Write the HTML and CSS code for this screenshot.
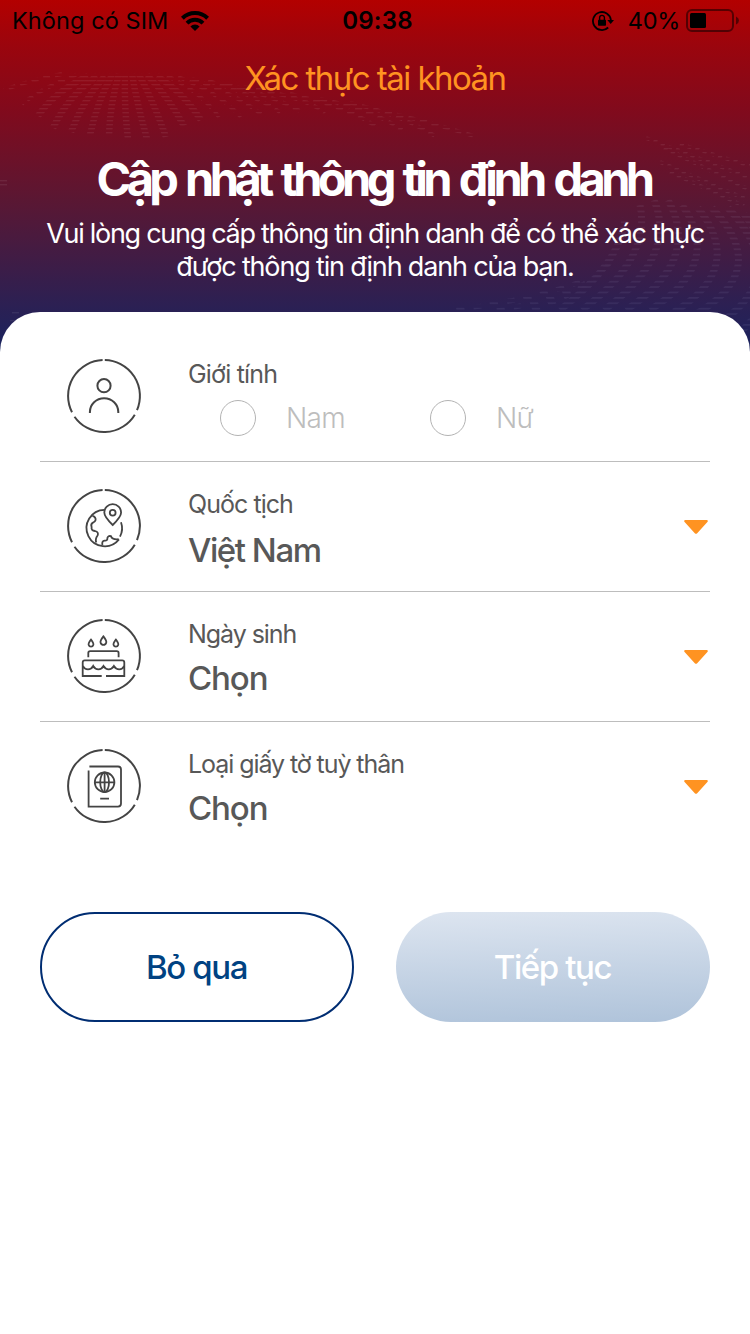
FILE: index.html
```html
<!DOCTYPE html>
<html lang="vi">
<head>
<meta charset="utf-8">
<title>Xác thực tài khoản</title>
<link rel="stylesheet" href="styles.css">
</head>
<body>
<svg class="defs" width="0" height="0">
  <defs>
    <symbol id="ring" viewBox="0 0 76 76">
      <path d="M38.8 2A36 36 0 0 1 71 52.2M68.8 56.7A36 36 0 0 1 8.5 58.7M6 54.3A36 36 0 0 1 36.6 2"/>
    </symbol>
    <symbol id="caret" viewBox="0 0 24 14">
      <path d="M1 0H23Q24.5 .8 23.4 2L13.2 13.2Q12 14.3 10.8 13.2L.6 2Q-.5 .8 1 0Z"/>
    </symbol>
    <pattern id="lines" width="20" height="4" patternUnits="userSpaceOnUse"><rect width="20" height="1.4" fill="#fff"/></pattern>
    <pattern id="lines-wide" width="20" height="5.4" patternUnits="userSpaceOnUse"><rect width="20" height="1.7" fill="#d8dcff"/></pattern>
  </defs>
</svg>
<div class="screen">
  <header class="hero">
    <svg class="waves" viewBox="0 0 750 352" fill="none">
      <g stroke="url(#lines)" stroke-width="6.5">
        <path d="M88 76Q54 92 38 116M97 76Q68 96 53 128M105 76Q83 100 71 132M112 75Q97 102 90 135M119 74Q110 104 109 135M125 74Q124 106 128 139M132 74Q137 104 147 139M139 75Q152 98 166 137M147 75Q168 96 184 126M157 76Q184 93 201 120"/>
      </g>
      <g stroke="url(#lines)" stroke-width="4" stroke-dasharray="7 5">
        <path d="M62 74Q24 82 4 90M76 75Q42 88 22 104M167 76Q202 92 221 120M178 77Q218 92 241 117M192 79Q236 94 261 114M208 81Q258 96 281 113M225 84Q280 98 303 113M244 87Q308 98 325 113M290 94Q350 108 375 126M320 99Q374 110 402 130M350 103Q400 114 435 136M385 112Q430 122 474 136"/>
        <path d="M0 181h12M0 185h9M12 314h9M10 320h8"/>
      </g>
      <g stroke="url(#lines-wide)" stroke-width="7">
        <path d="M625 218Q622 262 560 310M640 205Q652 258 582 310M654 200Q678 256 604 310M668 200Q702 260 626 310M682 205Q724 264 650 310M698 208Q746 268 674 312M712 208Q772 270 696 314M728 208Q792 276 718 324M744 214Q796 286 736 336"/>
      </g>
      <g stroke="url(#lines-wide)" stroke-width="5" stroke-dasharray="8 9">
        <path d="M580 282Q530 300 455 310M600 275Q560 300 490 312M610 262Q590 292 525 312"/>
      </g>
      <g stroke="url(#lines)" stroke-width="4" stroke-dasharray="4 4">
        <path d="M646 138L750 178M664 148L750 190M660 162L748 200M670 172L744 206M680 144L750 166"/>
      </g>
    </svg>
    <div class="status">
      <div class="status-left">
        <span class="carrier">Không có SIM</span>
        <svg class="wifi" viewBox="0 0 28 20" fill="none" stroke="#000" stroke-width="4">
          <path d="M1.4 7.2A18 18 0 0 1 26.6 7.2M6 12.1A11.3 11.3 0 0 1 22 12.1"/>
          <path d="M14 20L9.4 15.4A6.6 6.6 0 0 1 18.6 15.4Z" fill="#000" stroke="none"/>
        </svg>
      </div>
      <span class="clock">09:38</span>
      <div class="status-right">
        <svg class="lock" viewBox="0 0 22 20" fill="none" stroke="#000" stroke-width="1.8">
          <path d="M16.2 16.5A9 9 0 1 1 18.9 9"/>
          <path d="M15.3 9H22L18.7 13Z" fill="#000" stroke="none"/>
          <rect x="6" y="8.8" width="8" height="6" rx=".8" fill="#000" stroke="none"/>
          <path d="M7.6 9V6.8A2.4 2.4 0 0 1 12.4 6.8V9" stroke-width="1.4"/>
        </svg>
        <span class="percent">40%</span>
        <svg class="battery" viewBox="0 0 53 23">
          <rect x="1" y="1" width="46" height="21" rx="5" fill="none" stroke="#000" stroke-opacity=".5" stroke-width="2"/>
          <rect x="4" y="4" width="16" height="15" rx="1.5"/>
          <path d="M50 7.5Q53 9 53 11.5T50 15.5Z" fill-opacity=".5"/>
        </svg>
      </div>
    </div>
    <div class="nav-title"><span class="t-nav">Xác thực tài khoản</span></div>
    <h1 class="title">Cập nhật thông tin định danh</h1>
    <p class="lead"><span class="lead-1">Vui lòng cung cấp thông tin định danh để có thể xác thực</span><br><span class="lead-2">được thông tin định danh của bạn.</span></p>
  </header>
  <main class="panel">
    <section class="row">
      <svg class="icon" viewBox="0 0 76 76">
        <use href="#ring"/>
        <circle cx="38" cy="27.7" r="6.6"/>
        <path d="M23.9 55V54A14.1 13.7 0 0 1 52.3 54V55"/>
      </svg>
      <div class="field">
        <span class="label label-gender">Giới tính</span>
        <div class="options">
          <span class="option"><i class="radio"></i><span class="opt-text">Nam</span></span>
          <span class="option"><i class="radio"></i><span class="opt-text">Nữ</span></span>
        </div>
      </div>
    </section>
    <section class="row">
      <svg class="icon" viewBox="0 0 76 76">
        <use href="#ring"/>
        <g stroke-width="1.8">
          <path d="M38.5 21.9A18.2 18.2 0 1 0 53 51.4M55 34.2A18 18 0 0 1 54 48.6"/>
          <path d="M46.7 37Q38.3 29 38.3 24.6A8.4 8.4 0 0 1 55.1 24.6Q55.1 29 46.7 37Z"/>
          <circle cx="46.7" cy="24.7" r="2.9"/>
          <path d="M26.5 27.8Q30 29 29.6 32Q29 34 27 34.6Q24.4 36 25.6 39Q25 42.6 29 43Q33 44 31.6 47.5Q29 50.5 30.2 54.6M36.4 57Q35.6 53 38.6 52.6Q41.6 53 41.4 50Q42 47.4 45 48.2Q46 51.8 52.6 51.2"/>
        </g>
      </svg>
      <div class="field"><span class="label label-nation">Quốc tịch</span><span class="value value-country">Việt Nam</span></div>
      <svg class="caret"><use href="#caret"/></svg>
    </section>
    <section class="row">
      <svg class="icon" viewBox="0 0 76 76">
        <use href="#ring"/>
        <g stroke-width="1.8">
          <path d="M25 21.6Q28 25.4 27.3 27A2.4 2.4 0 0 1 22.7 27Q22 25.4 25 21.6ZM37.4 18.4Q41 23 40.2 24.8A2.9 2.9 0 0 1 34.6 24.8Q33.8 23 37.4 18.4ZM49.9 21.6Q52.9 25.4 52.2 27A2.4 2.4 0 0 1 47.6 27Q46.9 25.4 49.9 21.6Z"/>
          <path d="M22.3 39.3V35Q22.3 33.2 24.2 33.2H50.8Q52.6 33.2 52.6 35V39.3"/>
          <path d="M35.7 58H16.7V44.5Q16.7 42.4 18.8 42.4H56.2Q58.3 42.4 58.3 44.5V58H40"/>
          <path d="M16.7 48Q18.5 51.3 22 51.3T27.2 48Q29 51.3 32.4 51.3T37.5 48Q39.5 51.3 42.7 51.3T47.9 48Q49.8 51.3 53.2 51.3T58.3 48"/>
        </g>
      </svg>
      <div class="field"><span class="label label-birth">Ngày sinh</span><span class="value value-choose">Chọn</span></div>
      <svg class="caret"><use href="#caret"/></svg>
    </section>
    <section class="row">
      <svg class="icon" viewBox="0 0 76 76">
        <use href="#ring"/>
        <g stroke-width="1.8">
          <path d="M23.4 18.5H52Q55 18.5 55 21.5V55.6Q55 58.6 52 58.6H22.6V22.4"/>
          <circle cx="38.6" cy="34.3" r="9.8"/>
          <ellipse cx="38.6" cy="34.3" rx="4.4" ry="9.8"/>
          <path d="M28.8 34.3H48.4M38.6 24.5V44.1M34.2 50.6H43"/>
        </g>
      </svg>
      <div class="field"><span class="label label-doc">Loại giấy tờ tuỳ thân</span><span class="value value-choose">Chọn</span></div>
      <svg class="caret"><use href="#caret"/></svg>
    </section>
    <div class="actions">
      <button class="btn btn-outline" type="button">Bỏ qua</button>
      <button class="btn btn-primary" type="button">Tiếp tục</button>
    </div>
  </main>
</div>
</body>
</html>
```
FILE: styles.css
```css
* { box-sizing: border-box; }
body { margin: 0; background: #fff; font-family: Inter, "Noto Sans", sans-serif; white-space: nowrap; }
.defs { display: block; }
.screen { width: 750px; height: 1334px; overflow: hidden; background: #fff; }

.hero {
  position: relative;
  height: 352px;
  text-align: center;
  background: linear-gradient(180deg, #b30000 0, #9b050d 45px, #820a1c 108px, #5a1733 200px, #2c2053 305px, #18235f 352px);
}
.waves { position: absolute; left: 0; top: 0; width: 750px; height: 352px; opacity: .07; }
.status, .nav-title, .title, .lead { position: relative; }

.status { display: grid; grid-template-columns: 1fr auto 1fr; align-items: center; height: 40px; padding: 0 12px; color: #000; font-size: 23.5px; line-height: 40px; }
.status-left { display: flex; align-items: center; gap: 13px; }
.carrier { margin-top: 1px; letter-spacing: .08px; }
.wifi { width: 28px; height: 20px; }
.clock { margin: 1px 0 0 5px; font-weight: 600; font-size: 24px; letter-spacing: .2px; }
.status-right { display: flex; align-items: center; justify-content: flex-end; gap: 7px; }
.lock { width: 22px; height: 20px; margin-right: 7px; }
.percent { margin-top: 1px; letter-spacing: -.3px; }
.battery { width: 53px; height: 23px; margin: 0 -1px 0 -1px; }

.nav-title { height: 77px; color: #ff9321; font-size: 33px; line-height: 77px; }
.t-nav { letter-spacing: -1.53px; }
.title { height: 92px; margin: 18px 0 0; padding: 14px 3px 0 0; color: #fff; font-size: 47px; font-weight: 700; line-height: 60px; letter-spacing: -4.6px; word-spacing: 4.2px; }
.lead { margin: -10px 0 0; color: #fff; font-size: 27px; line-height: 33px; }
.lead-1 { letter-spacing: -1.29px; }
.lead-2 { letter-spacing: -1.17px; }

.panel { position: relative; height: 1022px; margin-top: -40px; padding: 20px 40px 0; border-radius: 40px 40px 0 0; background: #fff; }
.row { display: flex; height: 130px; padding: 26px 2px 0 26px; border-bottom: 1px solid #bdbdbd; color: #585858; }
.row:nth-of-type(4) { border-bottom-color: transparent; }
.icon { width: 76px; height: 76px; fill: none; stroke: #444; stroke-width: 2; }
.field { display: flex; flex: 1; flex-direction: column; margin-left: 46px; }
.label { height: 32px; font-size: 25px; line-height: 32px; }
.label-gender { letter-spacing: -.8px; }
.label-nation { letter-spacing: -.95px; }
.label-birth { letter-spacing: -1.05px; }
.label-doc { letter-spacing: -1.07px; }
.value { height: 44px; margin-top: 6px; font-size: 33px; font-weight: 500; line-height: 44px; }
.value-country { margin-top: 8px; letter-spacing: -1.45px; }
.value-choose { letter-spacing: -1.1px; }
.options { display: flex; gap: 85px; margin: 10px 0 0 32px; }
.option { display: flex; align-items: center; height: 36px; color: #bdbdbd; font-size: 28px; font-weight: 300; line-height: 36px; }
.radio { width: 36px; height: 36px; margin-right: 30px; border: 1px solid #b3b3b3; border-radius: 50%; }
.opt-text { letter-spacing: -.7px; }
.caret { width: 24px; height: 14px; margin-top: 32px; fill: #ff9321; }

.actions { display: flex; justify-content: space-between; margin-top: 60px; }
.btn { width: 314px; height: 110px; padding: 0 1px 0 0; border: 0; border-radius: 55px; font: 500 33px/110px Inter, "Noto Sans", sans-serif; letter-spacing: -1.4px; }
.btn-outline { border: 2px solid #002d72; background: #fff; color: #004282; line-height: 106px; }
.btn-primary { background: linear-gradient(178deg, #dde5f0, #afc3da); color: #fff; }
```
